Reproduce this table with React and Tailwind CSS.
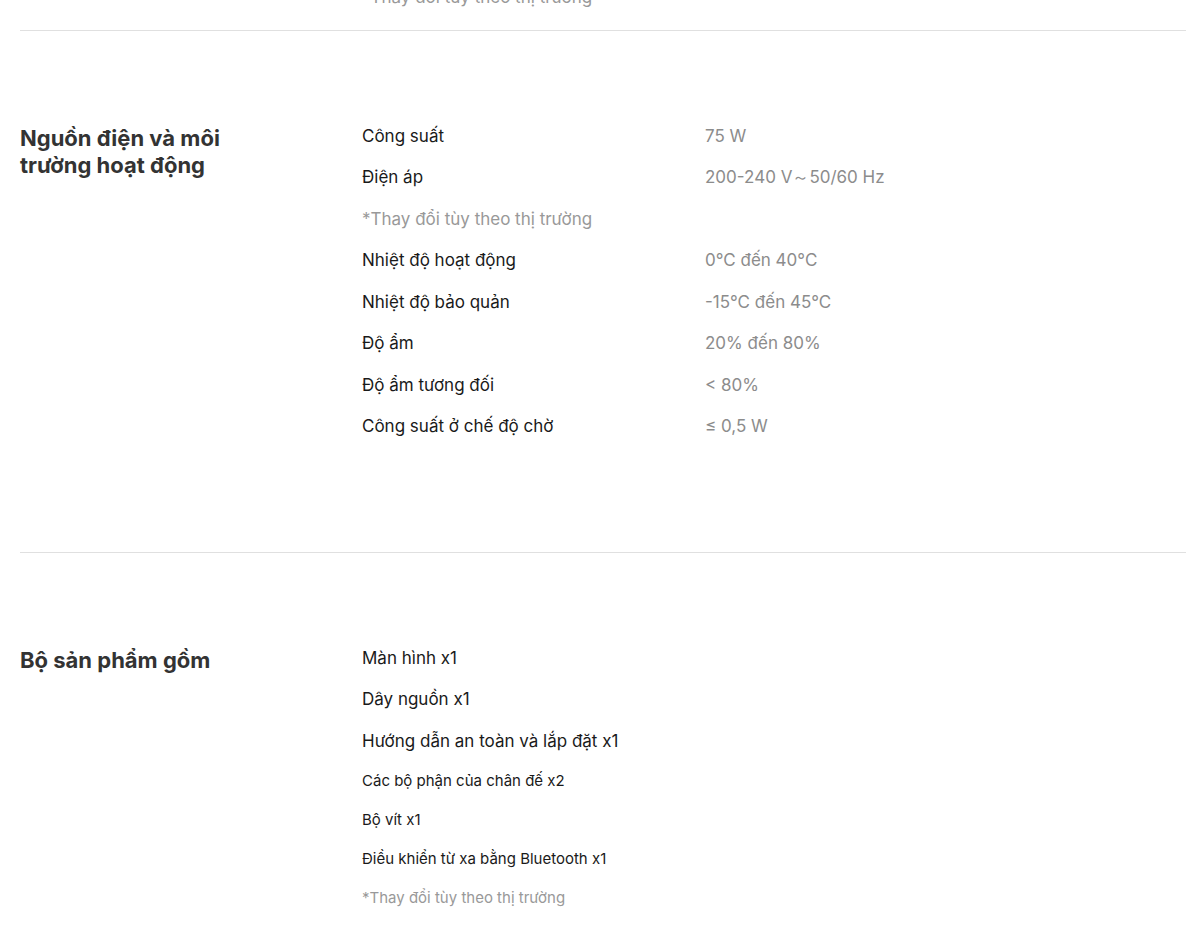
import React from "react";

const powerRows = [
	{ label: "Công suất", value: "75 W" },
	{ label: "Điện áp", value: "200-240 V～50/60 Hz" },
	{ label: "*Thay đổi tùy theo thị trường", note: true },
	{ label: "Nhiệt độ hoạt động", value: "0°C đến 40°C" },
	{ label: "Nhiệt độ bảo quản", value: "-15°C đến 45°C" },
	{ label: "Độ ẩm", value: "20% đến 80%" },
	{ label: "Độ ẩm tương đối", value: "< 80%" },
	{ label: "Công suất ở chế độ chờ", value: "≤ 0,5 W" },
];

const boxRows = [
	{ label: "Màn hình x1" },
	{ label: "Dây nguồn x1" },
	{ label: "Hướng dẫn an toàn và lắp đặt x1" },
	{ label: "Các bộ phận của chân đế x2", small: true },
	{ label: "Bộ vít x1", small: true },
	{ label: "Điều khiển từ xa bằng Bluetooth x1", small: true },
	{ label: "*Thay đổi tùy theo thị trường", small: true, note: true },
];

function Row({ row }) {
	if (row.small) {
		return (
			<div className={"h-[39px] flex items-center text-[15px] " + (row.note ? "text-[#999999]" : "text-[#1a1a1a]")}>
				{row.label}
			</div>
		);
	}
	return (
		<div className="h-[41.5px] grid grid-cols-[343px_1fr] items-center text-[17px]">
			<span className={row.note ? "text-[#999999]" : "text-[#1a1a1a]"}>{row.label}</span>
			{row.value && <span className="text-[#8c8c8c]">{row.value}</span>}
		</div>
	);
}

function Section({ title, rows }) {
	return (
		<section className="border-t border-[#e0e0e0] pt-[85px] pb-[104px] grid grid-cols-[342px_1fr]">
			<h2 className="mt-[9px] text-[22px] leading-[27px] font-bold text-[#333333] pr-[100px]">{title}</h2>
			<div className="flex flex-col">
				{rows.map((r, i) => <Row key={i} row={r} />)}
			</div>
		</section>
	);
}

export default function App() {
	return (
		<main className="w-[1200px] h-[936px] overflow-hidden bg-white" style={{ fontFamily: "Inter, 'Noto Sans', sans-serif" }}>
			<div className="pl-5 pr-[14px]">
				<div className="-mt-[23px] pb-[11px] grid grid-cols-[342px_1fr]">
					<div></div>
					<div className="h-[41.5px] flex items-center text-[17px] text-[#999999]">*Thay đổi tùy theo thị trường</div>
				</div>
				<Section title="Nguồn điện và môi trường hoạt động" rows={powerRows} />
				<Section title="Bộ sản phẩm gồm" rows={boxRows} />
			</div>
		</main>
	);
}
